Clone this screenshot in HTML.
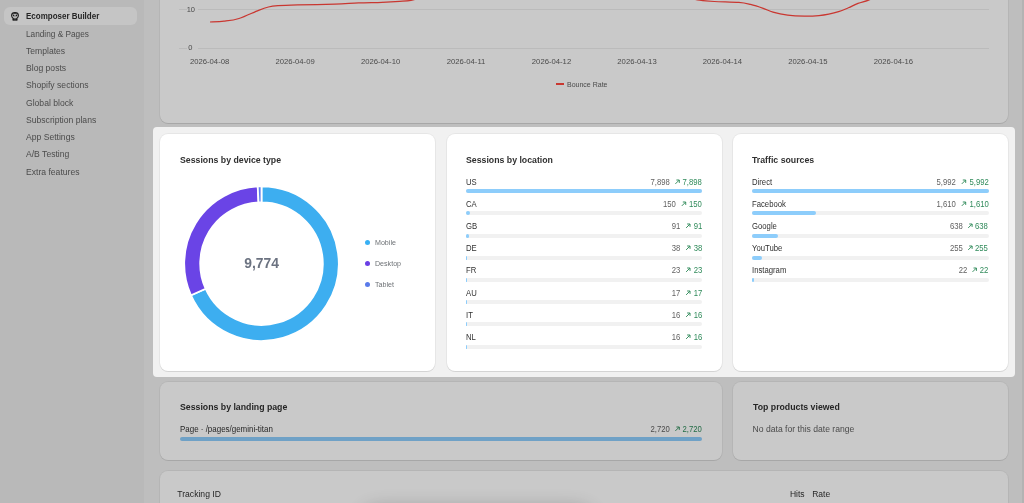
<!DOCTYPE html><html><head><meta charset="utf-8"><style>
html,body{margin:0;padding:0;width:1024px;height:503px;overflow:hidden;background:#f1f1f1}
body{position:relative;font-family:"Liberation Sans",sans-serif}
.t{position:absolute;white-space:nowrap}
body{-webkit-font-smoothing:antialiased}
.wrap{will-change:transform}
</style></head><body>
<div class="wrap" style="position:absolute;left:0;top:0;width:1024px;height:503px"><div style="position:absolute;left:0px;top:0px;width:144.3px;height:503px;background:#ebebeb"></div>
<div style="position:absolute;left:4px;top:7.2px;width:133px;height:17.9px;background:#fafafa;border-radius:6px"></div>
<svg style="position:absolute;left:10px;top:11px" width="10" height="10" viewBox="0 0 10 10">
<path d="M5 1.6C2.9 1.6 1.6 2.8 1.6 4.5c0 1.2.6 2.1 1.4 2.6V9.0h4V7.1c.8-.5 1.4-1.4 1.4-2.6C8.4 2.8 7.1 1.6 5 1.6z" fill="none" stroke="#222" stroke-width="1.1"/>
<path d="M2.2 3.0 Q5 1.4 7.8 3.0 L7.6 3.4 Q5 2.4 2.4 3.4Z" fill="#222"/>
<circle cx="3.6" cy="4.5" r="0.85" fill="#222"/><circle cx="6.4" cy="4.5" r="0.85" fill="#222"/>
<path d="M4.3 5.7 Q5 6.2 5.7 5.7" fill="none" stroke="#555" stroke-width="0.5"/>
<rect x="3.1" y="7.2" width="1.6" height="2.2" fill="#222"/><rect x="5.3" y="7.2" width="1.6" height="2.2" fill="#222"/>
</svg>
<div class="t" style="left:26.00px;top:12px;font-size:8.6px;line-height:8.6px;font-weight:700;color:#303030;transform:scaleX(0.93);transform-origin:0 50%">Ecomposer Builder</div>
<div class="t" style="left:26.00px;top:30px;font-size:8.6px;line-height:8.6px;font-weight:400;color:#616161;transform:scaleX(0.96);transform-origin:0 50%">Landing &amp; Pages</div>
<div class="t" style="left:26.00px;top:47px;font-size:8.6px;line-height:8.6px;font-weight:400;color:#616161;">Templates</div>
<div class="t" style="left:26.00px;top:64px;font-size:8.6px;line-height:8.6px;font-weight:400;color:#616161;">Blog posts</div>
<div class="t" style="left:26.00px;top:81px;font-size:8.6px;line-height:8.6px;font-weight:400;color:#616161;">Shopify sections</div>
<div class="t" style="left:26.00px;top:99px;font-size:8.6px;line-height:8.6px;font-weight:400;color:#616161;">Global block</div>
<div class="t" style="left:26.00px;top:116px;font-size:8.6px;line-height:8.6px;font-weight:400;color:#616161;">Subscription plans</div>
<div class="t" style="left:26.00px;top:133px;font-size:8.6px;line-height:8.6px;font-weight:400;color:#616161;">App Settings</div>
<div class="t" style="left:26.00px;top:150px;font-size:8.6px;line-height:8.6px;font-weight:400;color:#616161;">A/B Testing</div>
<div class="t" style="left:26.00px;top:168px;font-size:8.6px;line-height:8.6px;font-weight:400;color:#616161;">Extra features</div>
<div style="position:absolute;left:144.3px;top:0px;width:879.7px;height:503px;background:#f1f1f1"></div>
<div style="position:absolute;left:160px;top:-40px;width:848px;height:163px;background:#fff;border-radius:8px;box-shadow:0 0 0 1px rgba(0,0,0,.045), 0 1px 0 0 rgba(0,0,0,.08)"></div>
<div style="position:absolute;left:179px;top:8.8px;width:8px;height:1px;background:#eeeeee"></div>
<div style="position:absolute;left:198px;top:8.8px;width:791px;height:1px;background:#eeeeee"></div>
<div style="position:absolute;left:179px;top:47.6px;width:8px;height:1px;background:#eeeeee"></div>
<div style="position:absolute;left:198px;top:47.6px;width:791px;height:1px;background:#eeeeee"></div>
<div class="t" style="right:829.00px;top:6px;font-size:7.5px;line-height:7.5px;font-weight:400;color:#616161;">10</div>
<div class="t" style="right:831.50px;top:44px;font-size:7.5px;line-height:7.5px;font-weight:400;color:#616161;">0</div>
<div class="t" style="left:169.60px;width:80px;text-align:center;top:58px;font-size:7.7px;line-height:7.7px;font-weight:400;color:#616161;">2026-04-08</div>
<div class="t" style="left:255.08px;width:80px;text-align:center;top:58px;font-size:7.7px;line-height:7.7px;font-weight:400;color:#616161;">2026-04-09</div>
<div class="t" style="left:340.56px;width:80px;text-align:center;top:58px;font-size:7.7px;line-height:7.7px;font-weight:400;color:#616161;">2026-04-10</div>
<div class="t" style="left:426.04px;width:80px;text-align:center;top:58px;font-size:7.7px;line-height:7.7px;font-weight:400;color:#616161;">2026-04-11</div>
<div class="t" style="left:511.52px;width:80px;text-align:center;top:58px;font-size:7.7px;line-height:7.7px;font-weight:400;color:#616161;">2026-04-12</div>
<div class="t" style="left:597.00px;width:80px;text-align:center;top:58px;font-size:7.7px;line-height:7.7px;font-weight:400;color:#616161;">2026-04-13</div>
<div class="t" style="left:682.48px;width:80px;text-align:center;top:58px;font-size:7.7px;line-height:7.7px;font-weight:400;color:#616161;">2026-04-14</div>
<div class="t" style="left:767.96px;width:80px;text-align:center;top:58px;font-size:7.7px;line-height:7.7px;font-weight:400;color:#616161;">2026-04-15</div>
<div class="t" style="left:853.44px;width:80px;text-align:center;top:58px;font-size:7.7px;line-height:7.7px;font-weight:400;color:#616161;">2026-04-16</div>
<div style="position:absolute;left:556px;top:83.3px;width:8px;height:1.9px;background:#ff463e"></div>
<div class="t" style="left:567.00px;top:81px;font-size:7px;line-height:7px;font-weight:400;color:#616161;">Bounce Rate</div>
<svg style="position:absolute;left:0;top:0" width="1024" height="130"><path d="M210 22 C212.33 21.87 219.17 21.78 224.00 21.20 C228.83 20.62 233.23 20.32 239.00 18.50 C244.77 16.68 253.70 12.22 258.60 10.30 C263.50 8.38 265.17 7.77 268.40 7.00 C271.63 6.23 273.13 6.05 278.00 5.70 C282.87 5.35 288.10 5.17 297.60 4.90 C307.10 4.63 324.83 4.43 335.00 4.10 C345.17 3.77 350.77 3.20 358.60 2.90 C366.43 2.60 375.17 2.55 382.00 2.30 C388.83 2.05 394.77 1.72 399.60 1.40 C404.43 1.07 407.60 1.00 411.00 0.35 C414.40 -0.30 416.83 -1.11 420.00 -2.50 C423.17 -3.89 428.33 -7.08 430.00 -8.00" fill="none" stroke="#ff463e" stroke-width="1.25"/><path d="M680 -6 C681.67 -5.33 686.70 -3.03 690.00 -2.00 C693.30 -0.97 695.73 -0.38 699.80 0.20 C703.87 0.78 707.90 1.13 714.40 1.50 C720.90 1.87 732.78 1.92 738.80 2.40 C744.82 2.88 746.43 3.42 750.50 4.40 C754.57 5.38 759.45 7.00 763.20 8.30 C766.95 9.60 768.93 11.07 773.00 12.20 C777.07 13.33 782.37 14.45 787.60 15.10 C792.83 15.75 799.17 16.02 804.40 16.10 C809.63 16.18 814.93 15.92 819.00 15.60 C823.07 15.28 825.53 14.85 828.80 14.20 C832.07 13.55 835.33 12.77 838.60 11.70 C841.87 10.63 845.17 9.18 848.40 7.80 C851.63 6.42 854.73 4.65 858.00 3.40 C861.27 2.15 864.67 1.53 868.00 0.30 C871.33 -0.93 876.33 -3.28 878.00 -4.00" fill="none" stroke="#ff463e" stroke-width="1.25"/></svg>
<div style="position:absolute;left:160px;top:134px;width:275.0px;height:237.3px;background:#fff;border-radius:8px;box-shadow:0 0 0 1px rgba(0,0,0,.045), 0 1px 0 0 rgba(0,0,0,.08)"></div>
<div style="position:absolute;left:446.5px;top:134px;width:275.0px;height:237.3px;background:#fff;border-radius:8px;box-shadow:0 0 0 1px rgba(0,0,0,.045), 0 1px 0 0 rgba(0,0,0,.08)"></div>
<div style="position:absolute;left:733.0px;top:134px;width:275.0px;height:237.3px;background:#fff;border-radius:8px;box-shadow:0 0 0 1px rgba(0,0,0,.045), 0 1px 0 0 rgba(0,0,0,.08)"></div>
<div class="t" style="left:179.50px;top:156px;font-size:9.3px;line-height:9.3px;font-weight:700;color:#303030;transform:scaleX(0.94);transform-origin:0 50%">Sessions by device type</div>
<svg style="position:absolute;left:0;top:0" width="1024" height="503"><path d="M261.50 186.30 A77.3 77.3 0 1 1 190.99 295.29 L205.59 288.73 A61.3 61.3 0 1 0 261.50 202.30 Z" fill="#3daef0" stroke="#fff" stroke-width="1.8"/><path d="M190.99 295.29 A77.3 77.3 0 0 1 257.72 186.39 L258.51 202.37 A61.3 61.3 0 0 0 205.59 288.73 Z" fill="#6a44e6" stroke="#fff" stroke-width="1.8"/><path d="M257.72 186.39 A77.3 77.3 0 0 1 261.50 186.30 L261.50 202.30 A61.3 61.3 0 0 0 258.51 202.37 Z" fill="#5b7de9" stroke="#fff" stroke-width="1.8"/></svg>
<div class="t" style="left:221.60px;width:80px;text-align:center;top:257px;font-size:13.9px;line-height:13.9px;font-weight:700;color:#6b7280;">9,774</div>
<div style="position:absolute;left:364.7px;top:240.0px;width:5.2px;height:5.2px;background:#38b0f4;border-radius:50%"></div>
<div class="t" style="left:375.00px;top:240px;font-size:7.1px;line-height:7.1px;font-weight:400;color:#6d7175;">Mobile</div>
<div style="position:absolute;left:364.7px;top:261.0px;width:5.2px;height:5.2px;background:#6a3fe5;border-radius:50%"></div>
<div class="t" style="left:375.00px;top:261px;font-size:7.1px;line-height:7.1px;font-weight:400;color:#6d7175;">Desktop</div>
<div style="position:absolute;left:364.7px;top:282.0px;width:5.2px;height:5.2px;background:#5a7bea;border-radius:50%"></div>
<div class="t" style="left:375.00px;top:282px;font-size:7.1px;line-height:7.1px;font-weight:400;color:#6d7175;">Tablet</div>
<div class="t" style="left:465.80px;top:156px;font-size:9.3px;line-height:9.3px;font-weight:700;color:#303030;transform:scaleX(0.94);transform-origin:0 50%">Sessions by location</div>
<div class="t" style="left:465.80px;top:178px;font-size:8.3px;line-height:8.3px;font-weight:400;color:#303030;transform:scaleX(0.93);transform-origin:0 50%">US</div>
<div class="t" style="right:322.10px;top:178px;font-size:8.3px;line-height:8.3px;font-weight:400;color:#2f8a5a;transform:scaleX(0.93);transform-origin:100% 50%">7,898</div>
<svg style="position:absolute;left:674px;top:179px" width="8" height="8" viewBox="0 0 8 8"><g transform="translate(0.59,-0.3)"><path d="M0.8 5.2 L4.5 1.5 M1.8 1.3 H4.7 V4.2" fill="none" stroke="#2f8a5a" stroke-width="0.95"/></g></svg>
<div class="t" style="right:354.31px;top:178px;font-size:8.3px;line-height:8.3px;font-weight:400;color:#616161;transform:scaleX(0.93);transform-origin:100% 50%">7,898</div>
<div style="position:absolute;left:465.8px;top:189.1px;width:236.49999999999994px;height:4px;background:#f1f1f1;border-radius:2px"></div>
<div style="position:absolute;left:465.8px;top:189.1px;width:236.5px;height:4px;background:#8dcdfb;border-radius:2px"></div>
<div class="t" style="left:465.80px;top:200px;font-size:8.3px;line-height:8.3px;font-weight:400;color:#303030;transform:scaleX(0.93);transform-origin:0 50%">CA</div>
<div class="t" style="right:322.10px;top:200px;font-size:8.3px;line-height:8.3px;font-weight:400;color:#2f8a5a;transform:scaleX(0.93);transform-origin:100% 50%">150</div>
<svg style="position:absolute;left:681px;top:201px" width="8" height="8" viewBox="0 0 8 8"><g transform="translate(0.02,-0.3)"><path d="M0.8 5.2 L4.5 1.5 M1.8 1.3 H4.7 V4.2" fill="none" stroke="#2f8a5a" stroke-width="0.95"/></g></svg>
<div class="t" style="right:347.88px;top:200px;font-size:8.3px;line-height:8.3px;font-weight:400;color:#616161;transform:scaleX(0.93);transform-origin:100% 50%">150</div>
<div style="position:absolute;left:465.8px;top:211.29999999999998px;width:236.49999999999994px;height:4px;background:#f1f1f1;border-radius:2px"></div>
<div style="position:absolute;left:465.8px;top:211.29999999999998px;width:4.49px;height:4px;background:#8dcdfb;border-radius:2px"></div>
<div class="t" style="left:465.80px;top:222px;font-size:8.3px;line-height:8.3px;font-weight:400;color:#303030;transform:scaleX(0.93);transform-origin:0 50%">GB</div>
<div class="t" style="right:322.10px;top:222px;font-size:8.3px;line-height:8.3px;font-weight:400;color:#2f8a5a;transform:scaleX(0.93);transform-origin:100% 50%">91</div>
<svg style="position:absolute;left:685px;top:223px" width="8" height="8" viewBox="0 0 8 8"><g transform="translate(0.32,-0.3)"><path d="M0.8 5.2 L4.5 1.5 M1.8 1.3 H4.7 V4.2" fill="none" stroke="#2f8a5a" stroke-width="0.95"/></g></svg>
<div class="t" style="right:343.58px;top:222px;font-size:8.3px;line-height:8.3px;font-weight:400;color:#616161;transform:scaleX(0.93);transform-origin:100% 50%">91</div>
<div style="position:absolute;left:465.8px;top:233.5px;width:236.49999999999994px;height:4px;background:#f1f1f1;border-radius:2px"></div>
<div style="position:absolute;left:465.8px;top:233.5px;width:2.72px;height:4px;background:#8dcdfb;border-radius:2px"></div>
<div class="t" style="left:465.80px;top:244px;font-size:8.3px;line-height:8.3px;font-weight:400;color:#303030;transform:scaleX(0.93);transform-origin:0 50%">DE</div>
<div class="t" style="right:322.10px;top:244px;font-size:8.3px;line-height:8.3px;font-weight:400;color:#2f8a5a;transform:scaleX(0.93);transform-origin:100% 50%">38</div>
<svg style="position:absolute;left:685px;top:245px" width="8" height="8" viewBox="0 0 8 8"><g transform="translate(0.32,-0.3)"><path d="M0.8 5.2 L4.5 1.5 M1.8 1.3 H4.7 V4.2" fill="none" stroke="#2f8a5a" stroke-width="0.95"/></g></svg>
<div class="t" style="right:343.58px;top:244px;font-size:8.3px;line-height:8.3px;font-weight:400;color:#616161;transform:scaleX(0.93);transform-origin:100% 50%">38</div>
<div style="position:absolute;left:465.8px;top:255.7px;width:236.49999999999994px;height:4px;background:#f1f1f1;border-radius:2px"></div>
<div style="position:absolute;left:465.8px;top:255.7px;width:1.2px;height:4px;background:#8dcdfb;border-radius:2px"></div>
<div class="t" style="left:465.80px;top:266px;font-size:8.3px;line-height:8.3px;font-weight:400;color:#303030;transform:scaleX(0.93);transform-origin:0 50%">FR</div>
<div class="t" style="right:322.10px;top:266px;font-size:8.3px;line-height:8.3px;font-weight:400;color:#2f8a5a;transform:scaleX(0.93);transform-origin:100% 50%">23</div>
<svg style="position:absolute;left:685px;top:267px" width="8" height="8" viewBox="0 0 8 8"><g transform="translate(0.32,-0.3)"><path d="M0.8 5.2 L4.5 1.5 M1.8 1.3 H4.7 V4.2" fill="none" stroke="#2f8a5a" stroke-width="0.95"/></g></svg>
<div class="t" style="right:343.58px;top:266px;font-size:8.3px;line-height:8.3px;font-weight:400;color:#616161;transform:scaleX(0.93);transform-origin:100% 50%">23</div>
<div style="position:absolute;left:465.8px;top:277.9px;width:236.49999999999994px;height:4px;background:#f1f1f1;border-radius:2px"></div>
<div style="position:absolute;left:465.8px;top:277.9px;width:1.2px;height:4px;background:#8dcdfb;border-radius:2px"></div>
<div class="t" style="left:465.80px;top:289px;font-size:8.3px;line-height:8.3px;font-weight:400;color:#303030;transform:scaleX(0.93);transform-origin:0 50%">AU</div>
<div class="t" style="right:322.10px;top:289px;font-size:8.3px;line-height:8.3px;font-weight:400;color:#2f8a5a;transform:scaleX(0.93);transform-origin:100% 50%">17</div>
<svg style="position:absolute;left:685px;top:290px" width="8" height="8" viewBox="0 0 8 8"><g transform="translate(0.32,-0.3)"><path d="M0.8 5.2 L4.5 1.5 M1.8 1.3 H4.7 V4.2" fill="none" stroke="#2f8a5a" stroke-width="0.95"/></g></svg>
<div class="t" style="right:343.58px;top:289px;font-size:8.3px;line-height:8.3px;font-weight:400;color:#616161;transform:scaleX(0.93);transform-origin:100% 50%">17</div>
<div style="position:absolute;left:465.8px;top:300.1px;width:236.49999999999994px;height:4px;background:#f1f1f1;border-radius:2px"></div>
<div style="position:absolute;left:465.8px;top:300.1px;width:1.2px;height:4px;background:#8dcdfb;border-radius:2px"></div>
<div class="t" style="left:465.80px;top:311px;font-size:8.3px;line-height:8.3px;font-weight:400;color:#303030;transform:scaleX(0.93);transform-origin:0 50%">IT</div>
<div class="t" style="right:322.10px;top:311px;font-size:8.3px;line-height:8.3px;font-weight:400;color:#2f8a5a;transform:scaleX(0.93);transform-origin:100% 50%">16</div>
<svg style="position:absolute;left:685px;top:312px" width="8" height="8" viewBox="0 0 8 8"><g transform="translate(0.32,-0.3)"><path d="M0.8 5.2 L4.5 1.5 M1.8 1.3 H4.7 V4.2" fill="none" stroke="#2f8a5a" stroke-width="0.95"/></g></svg>
<div class="t" style="right:343.58px;top:311px;font-size:8.3px;line-height:8.3px;font-weight:400;color:#616161;transform:scaleX(0.93);transform-origin:100% 50%">16</div>
<div style="position:absolute;left:465.8px;top:322.29999999999995px;width:236.49999999999994px;height:4px;background:#f1f1f1;border-radius:2px"></div>
<div style="position:absolute;left:465.8px;top:322.29999999999995px;width:1.2px;height:4px;background:#8dcdfb;border-radius:2px"></div>
<div class="t" style="left:465.80px;top:333px;font-size:8.3px;line-height:8.3px;font-weight:400;color:#303030;transform:scaleX(0.93);transform-origin:0 50%">NL</div>
<div class="t" style="right:322.10px;top:333px;font-size:8.3px;line-height:8.3px;font-weight:400;color:#2f8a5a;transform:scaleX(0.93);transform-origin:100% 50%">16</div>
<svg style="position:absolute;left:685px;top:334px" width="8" height="8" viewBox="0 0 8 8"><g transform="translate(0.32,-0.3)"><path d="M0.8 5.2 L4.5 1.5 M1.8 1.3 H4.7 V4.2" fill="none" stroke="#2f8a5a" stroke-width="0.95"/></g></svg>
<div class="t" style="right:343.58px;top:333px;font-size:8.3px;line-height:8.3px;font-weight:400;color:#616161;transform:scaleX(0.93);transform-origin:100% 50%">16</div>
<div style="position:absolute;left:465.8px;top:344.5px;width:236.49999999999994px;height:4px;background:#f1f1f1;border-radius:2px"></div>
<div style="position:absolute;left:465.8px;top:344.5px;width:1.2px;height:4px;background:#8dcdfb;border-radius:2px"></div>
<div class="t" style="left:752.40px;top:156px;font-size:9.3px;line-height:9.3px;font-weight:700;color:#303030;transform:scaleX(0.94);transform-origin:0 50%">Traffic sources</div>
<div class="t" style="left:752.40px;top:178px;font-size:8.3px;line-height:8.3px;font-weight:400;color:#303030;transform:scaleX(0.93);transform-origin:0 50%">Direct</div>
<div class="t" style="right:35.70px;top:178px;font-size:8.3px;line-height:8.3px;font-weight:400;color:#2f8a5a;transform:scaleX(0.93);transform-origin:100% 50%">5,992</div>
<svg style="position:absolute;left:961px;top:179px" width="8" height="8" viewBox="0 0 8 8"><g transform="translate(-0.01,-0.3)"><path d="M0.8 5.2 L4.5 1.5 M1.8 1.3 H4.7 V4.2" fill="none" stroke="#2f8a5a" stroke-width="0.95"/></g></svg>
<div class="t" style="right:67.91px;top:178px;font-size:8.3px;line-height:8.3px;font-weight:400;color:#616161;transform:scaleX(0.93);transform-origin:100% 50%">5,992</div>
<div style="position:absolute;left:752.4px;top:189.1px;width:236.30000000000007px;height:4px;background:#f1f1f1;border-radius:2px"></div>
<div style="position:absolute;left:752.4px;top:189.1px;width:236.3px;height:4px;background:#8dcdfb;border-radius:2px"></div>
<div class="t" style="left:752.40px;top:200px;font-size:8.3px;line-height:8.3px;font-weight:400;color:#303030;transform:scaleX(0.93);transform-origin:0 50%">Facebook</div>
<div class="t" style="right:35.70px;top:200px;font-size:8.3px;line-height:8.3px;font-weight:400;color:#2f8a5a;transform:scaleX(0.93);transform-origin:100% 50%">1,610</div>
<svg style="position:absolute;left:961px;top:201px" width="8" height="8" viewBox="0 0 8 8"><g transform="translate(-0.01,-0.3)"><path d="M0.8 5.2 L4.5 1.5 M1.8 1.3 H4.7 V4.2" fill="none" stroke="#2f8a5a" stroke-width="0.95"/></g></svg>
<div class="t" style="right:67.91px;top:200px;font-size:8.3px;line-height:8.3px;font-weight:400;color:#616161;transform:scaleX(0.93);transform-origin:100% 50%">1,610</div>
<div style="position:absolute;left:752.4px;top:211.29999999999998px;width:236.30000000000007px;height:4px;background:#f1f1f1;border-radius:2px"></div>
<div style="position:absolute;left:752.4px;top:211.29999999999998px;width:63.49px;height:4px;background:#8dcdfb;border-radius:2px"></div>
<div class="t" style="left:752.40px;top:222px;font-size:8.3px;line-height:8.3px;font-weight:400;color:#303030;transform:scaleX(0.93);transform-origin:0 50%">Google</div>
<div class="t" style="right:35.70px;top:222px;font-size:8.3px;line-height:8.3px;font-weight:400;color:#2f8a5a;transform:scaleX(0.93);transform-origin:100% 50%">638</div>
<svg style="position:absolute;left:967px;top:223px" width="8" height="8" viewBox="0 0 8 8"><g transform="translate(0.42,-0.3)"><path d="M0.8 5.2 L4.5 1.5 M1.8 1.3 H4.7 V4.2" fill="none" stroke="#2f8a5a" stroke-width="0.95"/></g></svg>
<div class="t" style="right:61.48px;top:222px;font-size:8.3px;line-height:8.3px;font-weight:400;color:#616161;transform:scaleX(0.93);transform-origin:100% 50%">638</div>
<div style="position:absolute;left:752.4px;top:233.5px;width:236.30000000000007px;height:4px;background:#f1f1f1;border-radius:2px"></div>
<div style="position:absolute;left:752.4px;top:233.5px;width:25.16px;height:4px;background:#8dcdfb;border-radius:2px"></div>
<div class="t" style="left:752.40px;top:244px;font-size:8.3px;line-height:8.3px;font-weight:400;color:#303030;transform:scaleX(0.93);transform-origin:0 50%">YouTube</div>
<div class="t" style="right:35.70px;top:244px;font-size:8.3px;line-height:8.3px;font-weight:400;color:#2f8a5a;transform:scaleX(0.93);transform-origin:100% 50%">255</div>
<svg style="position:absolute;left:967px;top:245px" width="8" height="8" viewBox="0 0 8 8"><g transform="translate(0.42,-0.3)"><path d="M0.8 5.2 L4.5 1.5 M1.8 1.3 H4.7 V4.2" fill="none" stroke="#2f8a5a" stroke-width="0.95"/></g></svg>
<div class="t" style="right:61.48px;top:244px;font-size:8.3px;line-height:8.3px;font-weight:400;color:#616161;transform:scaleX(0.93);transform-origin:100% 50%">255</div>
<div style="position:absolute;left:752.4px;top:255.7px;width:236.30000000000007px;height:4px;background:#f1f1f1;border-radius:2px"></div>
<div style="position:absolute;left:752.4px;top:255.7px;width:10.06px;height:4px;background:#8dcdfb;border-radius:2px"></div>
<div class="t" style="left:752.40px;top:266px;font-size:8.3px;line-height:8.3px;font-weight:400;color:#303030;transform:scaleX(0.93);transform-origin:0 50%">Instagram</div>
<div class="t" style="right:35.70px;top:266px;font-size:8.3px;line-height:8.3px;font-weight:400;color:#2f8a5a;transform:scaleX(0.93);transform-origin:100% 50%">22</div>
<svg style="position:absolute;left:972px;top:267px" width="8" height="8" viewBox="0 0 8 8"><g transform="translate(-0.28,-0.3)"><path d="M0.8 5.2 L4.5 1.5 M1.8 1.3 H4.7 V4.2" fill="none" stroke="#2f8a5a" stroke-width="0.95"/></g></svg>
<div class="t" style="right:57.18px;top:266px;font-size:8.3px;line-height:8.3px;font-weight:400;color:#616161;transform:scaleX(0.93);transform-origin:100% 50%">22</div>
<div style="position:absolute;left:752.4px;top:277.9px;width:236.30000000000007px;height:4px;background:#f1f1f1;border-radius:2px"></div>
<div style="position:absolute;left:752.4px;top:277.9px;width:1.2px;height:4px;background:#8dcdfb;border-radius:2px"></div>
<div style="position:absolute;left:160px;top:382px;width:561.5px;height:78px;background:#fff;border-radius:8px;box-shadow:0 0 0 1px rgba(0,0,0,.045), 0 1px 0 0 rgba(0,0,0,.08)"></div>
<div style="position:absolute;left:733.0px;top:382px;width:275.0px;height:78px;background:#fff;border-radius:8px;box-shadow:0 0 0 1px rgba(0,0,0,.045), 0 1px 0 0 rgba(0,0,0,.08)"></div>
<div class="t" style="left:179.90px;top:403px;font-size:9.3px;line-height:9.3px;font-weight:700;color:#303030;transform:scaleX(0.94);transform-origin:0 50%">Sessions by landing page</div>
<div class="t" style="left:179.90px;top:425px;font-size:8.4px;line-height:8.4px;font-weight:400;color:#303030;transform:scaleX(0.95);transform-origin:0 50%">Page · /pages/gemini-titan</div>
<div class="t" style="right:322.10px;top:425px;font-size:8.3px;line-height:8.3px;font-weight:400;color:#2f8a5a;transform:scaleX(0.93);transform-origin:100% 50%">2,720</div>
<svg style="position:absolute;left:674px;top:426px" width="8" height="8" viewBox="0 0 8 8"><g transform="translate(0.59,-0.3)"><path d="M0.8 5.2 L4.5 1.5 M1.8 1.3 H4.7 V4.2" fill="none" stroke="#2f8a5a" stroke-width="0.95"/></g></svg>
<div class="t" style="right:354.31px;top:425px;font-size:8.3px;line-height:8.3px;font-weight:400;color:#616161;transform:scaleX(0.93);transform-origin:100% 50%">2,720</div>
<div style="position:absolute;left:179.9px;top:437px;width:522.4px;height:4px;background:#8dcdfb;border-radius:2px"></div>
<div class="t" style="left:752.60px;top:403px;font-size:9.3px;line-height:9.3px;font-weight:700;color:#303030;transform:scaleX(0.94);transform-origin:0 50%">Top products viewed</div>
<div class="t" style="left:752.60px;top:425px;font-size:8.6px;line-height:8.6px;font-weight:400;color:#616161;">No data for this date range</div>
<div style="position:absolute;left:160px;top:471px;width:848px;height:80px;background:#fff;border-radius:8px;box-shadow:0 0 0 1px rgba(0,0,0,.045), 0 1px 0 0 rgba(0,0,0,.08)"></div>
<div class="t" style="left:177.30px;top:490px;font-size:8.6px;line-height:8.6px;font-weight:400;color:#303030;">Tracking ID</div>
<div class="t" style="left:789.90px;top:490px;font-size:8.5px;line-height:8.5px;font-weight:400;color:#303030;">Hits</div>
<div class="t" style="left:812.20px;top:490px;font-size:8.5px;line-height:8.5px;font-weight:400;color:#303030;">Rate</div>
<div style="position:absolute;left:365px;top:512px;width:225px;height:60px;background:#fff;box-shadow:0 0 22px 2px rgba(0,0,0,.3);border-radius:12px"></div>
<div style="position:absolute;left:1022.4px;top:0px;width:1.6px;height:503px;background:rgba(0,0,0,.05)"></div>
<div style="position:absolute;left:153px;top:127px;width:862px;height:250.2px;border-radius:4px;box-shadow:0 0 0 3000px rgba(0,0,0,.21)"></div></div>
</body></html>
